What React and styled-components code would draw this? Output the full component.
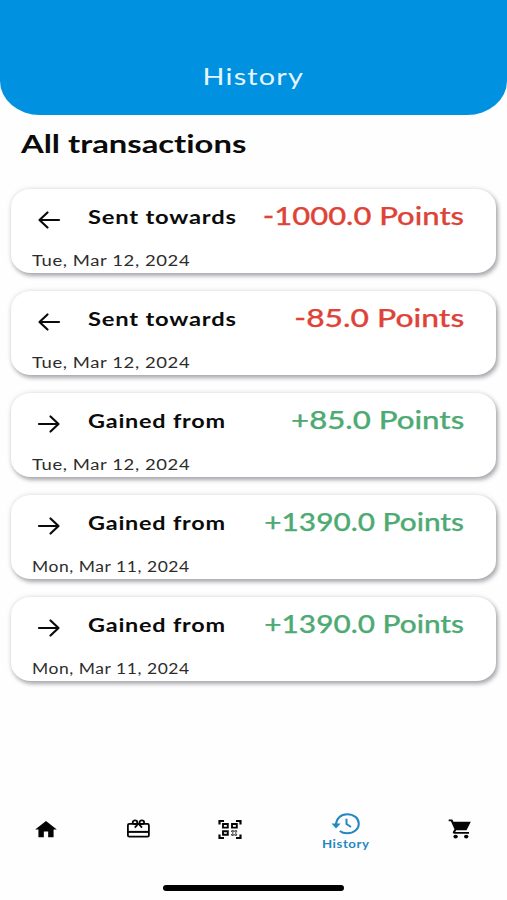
import styled, { createGlobalStyle } from 'styled-components';
import { MdHome } from 'react-icons/md';

const GlobalStyle = createGlobalStyle`
  * {
    box-sizing: border-box;
  }

  body {
    margin: 0;
    background: #fefefe;
    font-family: Lato, 'Open Sans', sans-serif;
    font-variant-ligatures: none;
    color: #0b0b0b;
  }
`;

const Screen = styled.div`
  height: 900px;
  display: flex;
  flex-direction: column;
  overflow: hidden;
`;

const Header = styled.header`
  height: 115px;
  flex: none;
  display: flex;
  justify-content: center;
  padding-top: 61px;
  background: #0091e1;
  border-radius: 0 0 40px 40px / 0 0 34px 34px;
`;

// Lato is narrower than the brand face, so labels are widened sideways
const Wide = styled.span`
  display: inline-block;
  white-space: nowrap;
  transform: scaleX(${({ $scale }) => $scale || 1.2});
  transform-origin: ${({ $origin }) => $origin || 'left'} center;
`;

const Title = styled.h1`
  margin: 0;
  font-size: 24px;
  font-weight: 400;
  line-height: 30px;
  letter-spacing: 1px;
  color: #e4f6ff;
`;

const SectionTitle = styled.h2`
  margin: 14px 0 0 21px;
  font-size: 24px;
  font-weight: 700;
  line-height: 30px;
`;

const List = styled.ul`
  list-style: none;
  margin: 30px 11px 0;
  padding: 0;
  display: flex;
  flex-direction: column;
  gap: 18px;
`;

const Card = styled.li`
  height: 84px;
  padding: 12px 32px 0 21px;
  background: #fff;
  border-radius: 20px / 18px;
  box-shadow: 2px 3px 4px rgba(70, 70, 80, 0.42), 0 0 5px rgba(90, 90, 100, 0.2);
`;

const Row = styled.div`
  display: flex;
  align-items: center;
  height: 32px;
`;

const Arrow = styled.svg`
  width: 24px;
  height: 20px;
  margin: 6px 0 0 5px;
  fill: none;
  stroke: #0b0b0b;
  stroke-width: 2.2;
  stroke-linecap: round;
  stroke-linejoin: round;
  transform: ${({ $flip }) => ($flip ? 'scaleX(-1)' : 'none')};
`;

const Label = styled.div`
  margin-left: 27px;
  font-size: 18px;
  font-weight: 700;
  line-height: 32px;
  letter-spacing: 0.6px;
`;

const Amount = styled.div`
  margin: -2px 0 0 auto;
  font-size: 24px;
  font-weight: 500;
  line-height: 32px;
  color: ${({ $negative }) => ($negative ? '#de4338' : '#4eaa73')};
  -webkit-text-stroke: 0.25px currentColor;
`;

const DateText = styled.div`
  margin-top: 17px;
  font-size: 15.5px;
  line-height: 20px;
  letter-spacing: 0.5px;
  color: #2c2c2c;
`;

const Nav = styled.nav`
  margin-top: auto;
  height: 74px;
  display: grid;
  grid-template-columns: 2fr 2fr 2fr 3fr 2fr;
`;

const NavItem = styled.div`
  padding-top: ${({ $top }) => $top || 0}px;
  display: flex;
  flex-direction: column;
  align-items: center;
  color: ${({ $active }) => ($active ? '#2487c2' : '#050505')};

  svg {
    width: 26px;
    height: 23px;
    flex: none;
  }
`;

const HistoryGlyph = styled.svg`
  && {
    width: 30px;
    height: 24px;
  }
`;

const NavLabel = styled.span`
  font-size: 11.5px;
  font-weight: 700;
  line-height: 16px;
  letter-spacing: 0.5px;
`;

const HomeIndicator = styled.div`
  width: 181px;
  height: 6px;
  flex: none;
  margin: 0 auto 9px 163px;
  border-radius: 3px;
  background: #000;
`;

const transactions = [
  { sent: true, points: '-1000.0', date: 'Tue, Mar 12, 2024', scale: 1.29, dateScale: 1.19 },
  { sent: true, points: '-85.0', date: 'Tue, Mar 12, 2024', scale: 1.325, dateScale: 1.19 },
  { sent: false, points: '+85.0', date: 'Tue, Mar 12, 2024', scale: 1.3, dateScale: 1.19 },
  { sent: false, points: '+1390.0', date: 'Mon, Mar 11, 2024', scale: 1.24, dateScale: 1.125 },
  { sent: false, points: '+1390.0', date: 'Mon, Mar 11, 2024', scale: 1.24, dateScale: 1.125 },
];

function Transaction({ sent, points, date, scale, dateScale }) {
  return (
    <Card>
      <Row>
        <Arrow viewBox="0 0 24 20" $flip={!sent}>
          <path d="M22 10H3M10.5 2.5L2.5 10l8 7.5" />
        </Arrow>
        <Label>
          <Wide $scale={sent ? 1.32 : 1.3}>{sent ? 'Sent towards' : 'Gained from'}</Wide>
        </Label>
        <Amount $negative={sent}>
          <Wide $scale={scale} $origin="right">{points} Points</Wide>
        </Amount>
      </Row>
      <DateText>
        <Wide $scale={dateScale}>{date}</Wide>
      </DateText>
    </Card>
  );
}

function GiftIcon() {
  return (
    <svg viewBox="0 0 26 23" fill="none" stroke="currentColor" strokeWidth="1.8">
      <rect x="2.9" y="5.900" width="21" height="12.700" rx="1.300" />
      <path d="M3 13.900h21" strokeWidth="2" />
      <ellipse cx="10" cy="4.200" rx="2.300" ry="1.800" />
      <ellipse cx="16.800" cy="4.200" rx="2.300" ry="1.800" />
      <path d="M13.400 5.500l-3.600 4.200M13.400 5.500l3.600 4.200" />
    </svg>
  );
}

function QrIcon() {
  return (
    <svg viewBox="0 0 26 23" fill="none" stroke="currentColor">
      <path d="M2.500 6.500V3H7M19 3h4.500v3.500M2.500 16.500V20H7M19 20h4.500v-3.500" strokeWidth="2.200" />
      <path d="M6 6h4.800v3.600H6zM15 6h4.800v3.600H15zM6 13.200h4.800v3.600H6z" strokeWidth="1.900" />
      <path d="M14 13.300h6.500M14 16.700h6.500M15.700 12v6.500M18.800 12v6.500" strokeWidth="1.400" strokeDasharray="1.500 0.800" opacity="0.7" />
    </svg>
  );
}

function HistoryIcon() {
  return (
    <HistoryGlyph viewBox="0 0 30 24" fill="none" stroke="currentColor" strokeWidth="2">
      <path d="M5 13C5 6.500 9.800 2.200 16.200 2.200c6.600 0 11.600 4 11.600 9.500s-5 9.600-11.600 9.600c-3.200 0-5.600-.8-7.400-2.300" />
      <path d="M.5 11.500h9.200L5 16.500z" fill="currentColor" stroke="none" />
      <path d="M15.500 6.800V12l4.500 3" />
    </HistoryGlyph>
  );
}

function CartIcon() {
  return (
    <svg viewBox="0 0 26 23" fill="currentColor">
      <path d="M.7 1.500h3.600l1.200 2.200h17.300l-4.300 8.600H8.200L7.200 14H21v1.700H6.300c-1.300 0-1.900-1-1.200-2.100l1.400-2.300L2.900 3.300H.7z" />
      <ellipse cx="7.600" cy="18.600" rx="2.200" ry="1.900" />
      <ellipse cx="18.200" cy="18.600" rx="2.200" ry="1.900" />
    </svg>
  );
}

export default function App() {
  return (
    <Screen>
      <GlobalStyle />
      <Header>
        <Title>
          <Wide $scale={1.2} $origin="center">History</Wide>
        </Title>
      </Header>
      <SectionTitle>
        <Wide $scale={1.365}>All transactions</Wide>
      </SectionTitle>
      <List>
        {transactions.map((item, i) => (
          <Transaction key={i} {...item} />
        ))}
      </List>
      <Nav>
        <NavItem $top={7}>
          <MdHome preserveAspectRatio="none" />
        </NavItem>
        <NavItem $top={7}>
          <GiftIcon />
        </NavItem>
        <NavItem $top={7}>
          <QrIcon />
        </NavItem>
        <NavItem $active $top={1}>
          <HistoryIcon />
          <NavLabel>
            <Wide $scale={1.15} $origin="center">History</Wide>
          </NavLabel>
        </NavItem>
        <NavItem $top={7}>
          <CartIcon />
        </NavItem>
      </Nav>
      <HomeIndicator />
    </Screen>
  );
}
